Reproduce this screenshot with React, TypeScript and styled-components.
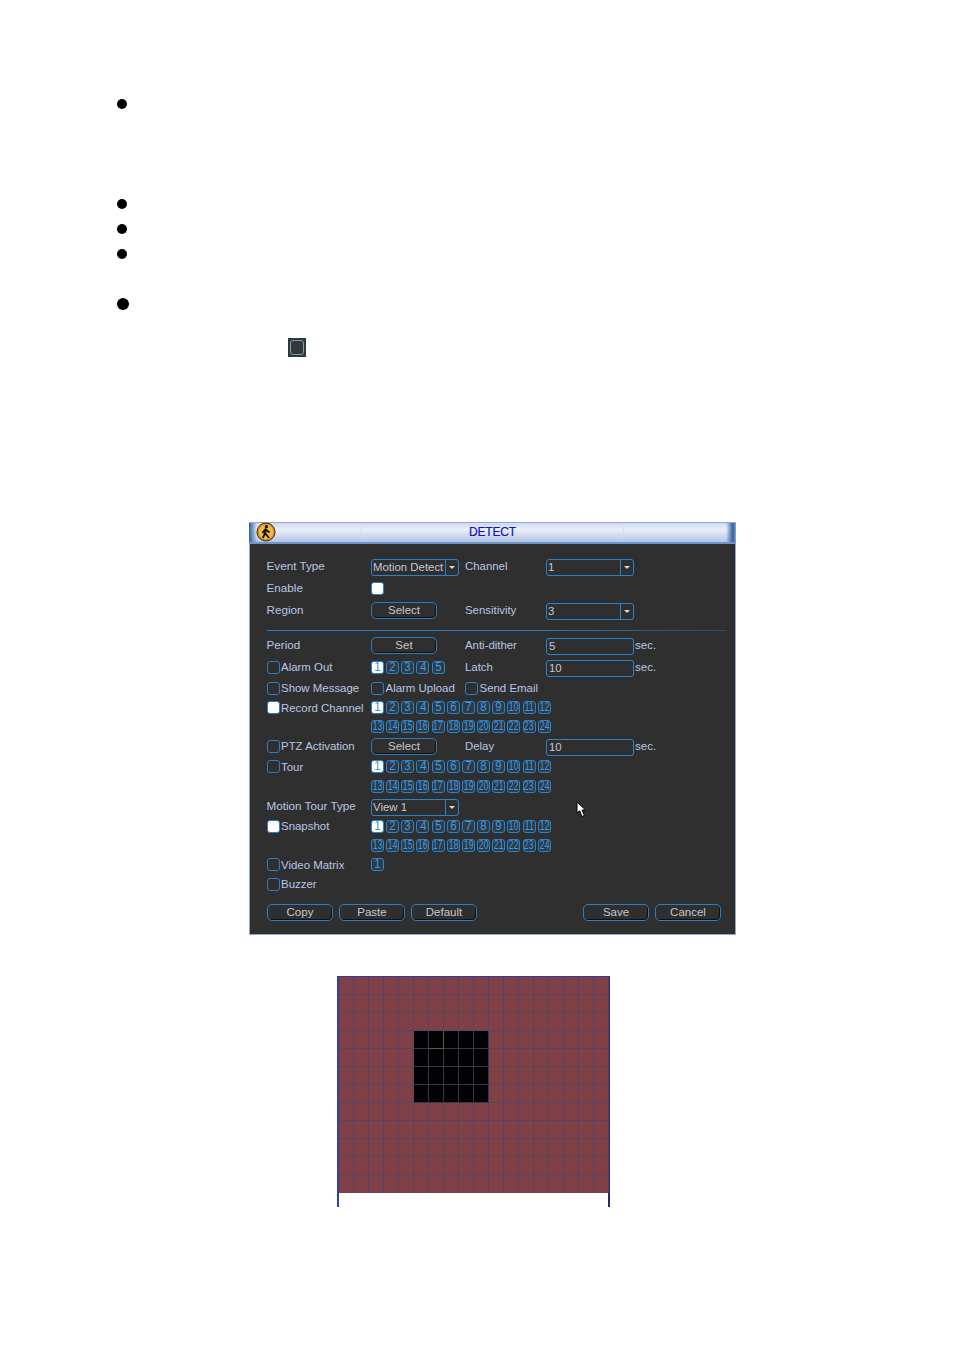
import React from 'react';
import styled, { createGlobalStyle } from 'styled-components';

const GlobalStyle = createGlobalStyle`
    html, body {
        margin: 0;
        padding: 0;
        background: #fff;
    }
    body {
        font-family: "Liberation Sans", Arial, sans-serif;
    }
`;

const first = Array.from({ length: 12 }, (_, i) => i + 1);
const second = Array.from({ length: 12 }, (_, i) => i + 13);

function Num({ n, on }: { n: number; on?: boolean }) {
    return (
        <NumberBox $on={on}>
            <Digits $wide={n > 9}>{n}</Digits>
        </NumberBox>
    );
}

function Channels({ list, active }: { list: number[]; active?: boolean }) {
    return (
        <NumberRow>
            {list.map((n) => (
                <Num key={n} n={n} on={active && n === 1} />
            ))}
        </NumberRow>
    );
}

function Dropdown({ value }: { value: string }) {
    return (
        <Select>
            <SelectValue>{value}</SelectValue>
            <SelectArrow />
        </Select>
    );
}

function CheckLabel({ text, on }: { text: string; on?: boolean }) {
    return (
        <CheckWrap>
            <Check $on={on} />
            <span>{text}</span>
        </CheckWrap>
    );
}

function WalkerIcon() {
    return (
        <svg width="20" height="20" viewBox="0 0 20 20">
            <circle cx="10" cy="10" r="9" fill="#d98f1e" stroke="#3a2c14" strokeWidth="1" />
            <circle cx="10" cy="10" r="7.2" fill="#f6bc3c" />
            <circle cx="10.4" cy="4.8" r="1.7" fill="#111" />
            <path d="M10.2 7 L9 11.5 L6.8 16 M9.2 11 L13 16 M6.4 11 L9.4 7.2 L13.6 10.4" fill="none" stroke="#111" strokeWidth="1.9" />
        </svg>
    );
}

function Pointer() {
    return (
        <PointerWrap>
            <svg width="11" height="17" viewBox="0 0 11 17">
                <path d="M1 1 L1 12 L3.6 9.8 L6 15.5 L8.4 14.4 L6 9 L9.6 9 Z" fill="#fff" stroke="#000" strokeWidth="1" />
            </svg>
        </PointerWrap>
    );
}

const cells = Array.from({ length: 216 }, (_, i) => {
    const col = i % 18;
    const row = Math.floor(i / 18);
    return { col, row, off: col >= 5 && col <= 9 && row >= 3 && row <= 6 };
});

export default function App() {
    return (
        <Page>
            <GlobalStyle />
            <BulletList>
                <Bullet $h={100} />
                <Bullet $h={25} />
                <Bullet $h={25} />
                <Bullet $h={49} />
                <Bullet $h={36} $big />
            </BulletList>
            <InlineIcon />

            <Dialog>
                <TitleBar>
                    <TitleIcon><WalkerIcon /></TitleIcon>
                    <TitleInset>DETECT</TitleInset>
                </TitleBar>
                <Body>
                    <Row $h={22}>
                        <LabelCol $plain>Event Type</LabelCol>
                        <ValueCol><Dropdown value="Motion Detect" /></ValueCol>
                        <ThirdCol>Channel</ThirdCol>
                        <Dropdown value="1" />
                    </Row>
                    <Row $h={22}>
                        <LabelCol $plain>Enable</LabelCol>
                        <ValueCol><Check $on /></ValueCol>
                    </Row>
                    <Row $h={22}>
                        <LabelCol $plain>Region</LabelCol>
                        <ValueCol><ActionButton>Select</ActionButton></ValueCol>
                        <ThirdCol>Sensitivity</ThirdCol>
                        <Dropdown value="3" />
                    </Row>
                    <Divider />
                    <Row $h={22}>
                        <LabelCol $plain>Period</LabelCol>
                        <ValueCol><ActionButton>Set</ActionButton></ValueCol>
                        <ThirdCol>Anti-dither</ThirdCol>
                        <TextInput>5</TextInput>
                        <Unit>sec.</Unit>
                    </Row>
                    <Row $h={22}>
                        <LabelCol><CheckLabel text="Alarm Out" /></LabelCol>
                        <ValueCol>
                            <NumberRow>
                                {[1, 2, 3, 4, 5].map((n) => <Num key={n} n={n} on={n === 1} />)}
                            </NumberRow>
                        </ValueCol>
                        <ThirdCol>Latch</ThirdCol>
                        <TextInput>10</TextInput>
                        <Unit>sec.</Unit>
                    </Row>
                    <Row $h={20}>
                        <LabelCol><CheckLabel text="Show Message" /></LabelCol>
                        <ValueCol><CheckLabel text="Alarm Upload" /></ValueCol>
                        <ThirdCol><CheckLabel text="Send Email" /></ThirdCol>
                    </Row>
                    <Row $h={19}>
                        <LabelCol><CheckLabel text="Record Channel" on /></LabelCol>
                        <Channels list={first} active />
                    </Row>
                    <Row $h={19}>
                        <LabelCol />
                        <Channels list={second} />
                    </Row>
                    <Row $h={20}>
                        <LabelCol><CheckLabel text="PTZ Activation" /></LabelCol>
                        <ValueCol><ActionButton>Select</ActionButton></ValueCol>
                        <ThirdCol>Delay</ThirdCol>
                        <TextInput>10</TextInput>
                        <Unit>sec.</Unit>
                    </Row>
                    <Row $h={21}>
                        <LabelCol><CheckLabel text="Tour" /></LabelCol>
                        <Channels list={first} active />
                    </Row>
                    <Row $h={19}>
                        <LabelCol />
                        <Channels list={second} />
                    </Row>
                    <Row $h={20}>
                        <LabelCol $plain>Motion Tour Type</LabelCol>
                        <ValueCol><Dropdown value="View 1" /></ValueCol>
                    </Row>
                    <Row $h={20}>
                        <LabelCol><CheckLabel text="Snapshot" on /></LabelCol>
                        <Channels list={first} active />
                    </Row>
                    <Row $h={19}>
                        <LabelCol />
                        <Channels list={second} />
                    </Row>
                    <Row $h={19}>
                        <LabelCol><CheckLabel text="Video Matrix" /></LabelCol>
                        <NumberRow><Num n={1} /></NumberRow>
                    </Row>
                    <Row $h={20}>
                        <LabelCol><CheckLabel text="Buzzer" /></LabelCol>
                    </Row>
                    <ButtonBar>
                        <ButtonGroup>
                            <ActionButton>Copy</ActionButton>
                            <ActionButton>Paste</ActionButton>
                            <ActionButton>Default</ActionButton>
                        </ButtonGroup>
                        <ButtonGroup>
                            <ActionButton>Save</ActionButton>
                            <ActionButton>Cancel</ActionButton>
                        </ButtonGroup>
                    </ButtonBar>
                    <Pointer />
                </Body>
            </Dialog>

            <RegionFrame>
                <RegionGrid>
                    {cells.map((c) => (
                        <Cell key={`${c.col}-${c.row}`} $off={c.off} $mark={c.col === 6 && c.row === 3} $last={c.row === 11} />
                    ))}
                </RegionGrid>
            </RegionFrame>
        </Page>
    );
}

const Page = styled.div`
    width: 954px;
    height: 1350px;
    padding-top: 99px;
    box-sizing: border-box;
    overflow: hidden;
    background: #fff;
`;

const BulletList = styled.div`
    display: flex;
    flex-direction: column;
    padding-left: 117px;
`;

const Bullet = styled.div<{ $h: number; $big?: boolean }>`
    height: ${(p) => p.$h}px;
    &::before {
        content: '';
        display: block;
        width: ${(p) => (p.$big ? 12 : 10)}px;
        height: ${(p) => (p.$big ? 12 : 10)}px;
        border-radius: 50%;
        background: #000;
    }
`;

const InlineIcon = styled.div`
    width: 18px;
    height: 19px;
    margin-left: 288px;
    margin-top: 4px;
    box-sizing: border-box;
    background: #2b3a40;
    padding: 2px;
    &::before {
        content: '';
        display: block;
        width: 14px;
        height: 15px;
        box-sizing: border-box;
        border: 1px solid #7f9ea6;
        border-radius: 3px;
        background: #33373a;
    }
`;

const Dialog = styled.div`
    width: 487px;
    height: 413px;
    margin: 165px 0 0 249px;
    box-sizing: border-box;
    display: flex;
    flex-direction: column;
    color: #b9c6e6;
    font-size: 11.7px;
`;

const TitleBar = styled.div`
    height: 20px;
    flex: none;
    display: flex;
    box-sizing: border-box;
    position: relative;
    border-top: 1px solid #8fa8d8;
    background:
        linear-gradient(90deg, #2f5f9a 0, rgba(47, 95, 154, 0) 8px, rgba(47, 95, 154, 0) calc(100% - 10px), #2f5f9a calc(100% - 3px), #8fa8d0 100%),
        linear-gradient(180deg, #cfd9f0 0, #eaeff9 35%, #b4c4e6 100%);
`;

const TitleIcon = styled.div`
    position: absolute;
    left: 7px;
    top: -1px;
    height: 20px;
`;

const TitleInset = styled.div`
    margin: 1px 0 0 112px;
    width: 263px;
    height: 14px;
    box-sizing: border-box;
    border: 1px solid #d6dcec;
    border-bottom: none;
    display: flex;
    align-items: center;
    justify-content: center;
    color: #1111cc;
    font-size: 12px;
    letter-spacing: -0.2px;
    -webkit-text-stroke: 0.2px #1111cc;
`;

const Body = styled.div`
    flex: 1;
    position: relative;
    box-sizing: border-box;
    background: #2f2f2f;
    border: 1px solid #8ea6cc;
    border-top: 2px solid #6f94c8;
    padding: 11px 0 0 17px;
`;

const Row = styled.div<{ $h: number }>`
    height: ${(p) => p.$h}px;
    display: flex;
    align-items: center;
`;

const LabelCol = styled.div<{ $plain?: boolean }>`
    width: 104px;
    flex: none;
    white-space: nowrap;
    text-indent: -0.5px;
    padding-bottom: ${(p) => (p.$plain ? 2 : 0)}px;
`;

const ValueCol = styled.div`
    width: 94px;
    flex: none;
    white-space: nowrap;
    font-size: 11.5px;
`;

const ThirdCol = styled.div`
    width: 81px;
    flex: none;
    white-space: nowrap;
    font-size: 11.4px;
`;

const CheckWrap = styled.div`
    display: flex;
    align-items: center;
    gap: 1.5px;
    font-size: 11.45px;
`;

const Check = styled.div<{ $on?: boolean }>`
    width: 13px;
    height: 13px;
    flex: none;
    box-sizing: border-box;
    border: 1px solid #2a7fc4;
    border-radius: 3px;
    background: ${(p) => (p.$on ? '#fff' : 'transparent')};
`;

const Select = styled.div`
    width: 88px;
    height: 17px;
    margin-top: 2px;
    box-sizing: border-box;
    border: 1px solid #2a84cc;
    border-radius: 3px;
    display: flex;
    align-items: stretch;
`;

const SelectValue = styled.div`
    flex: 1;
    padding-left: 1px;
    line-height: 15px;
    font-size: 11.4px;
    color: #c4c8d2;
    white-space: nowrap;
`;

const SelectArrow = styled.div`
    width: 13px;
    flex: none;
    box-sizing: border-box;
    border-left: 1px solid #2a84cc;
    display: flex;
    align-items: center;
    justify-content: center;
    &::before {
        content: '';
        border-left: 3px solid transparent;
        border-right: 3px solid transparent;
        border-top: 3px solid #d8d8d8;
    }
`;

const ActionButton = styled.div`
    width: 66px;
    height: 17px;
    margin-top: 1px;
    box-sizing: border-box;
    border: 1px solid #2a7fc4;
    border-radius: 5px;
    box-shadow: inset -1px -1px 0 #111;
    color: #c8c8c8;
    text-align: center;
    font-size: 11.5px;
    line-height: 15px;
`;

const Divider = styled.div`
    height: 1px;
    margin: 9px 9px 3px 0;
    background: linear-gradient(90deg, #2a7fc4 0, #2a7fc4 55%, #2c4a62 100%);
`;

const TextInput = styled.div`
    width: 88px;
    height: 17px;
    margin-top: 2px;
    flex: none;
    box-sizing: border-box;
    border: 1px solid #2a84cc;
    border-radius: 3px;
    padding-left: 2px;
    line-height: 15px;
    font-size: 11.4px;
    color: #c4c8d2;
`;

const Unit = styled.div`
    font-size: 11.5px;
    margin-left: 1px;
`;

const NumberRow = styled.div`
    display: flex;
    gap: 2.17px;
`;

const NumberBox = styled.div<{ $on?: boolean }>`
    width: 13px;
    height: 13px;
    box-sizing: border-box;
    border: 1px solid #2a84cc;
    border-radius: 3px;
    display: flex;
    align-items: center;
    justify-content: center;
    background: ${(p) => (p.$on ? '#fff' : 'rgba(42, 132, 204, 0.14)')};
    color: ${(p) => (p.$on ? '#3a94d8' : '#3d9ae6')};
    font-size: 12px;
    line-height: 11px;
    text-indent: 0;
`;

const Digits = styled.span<{ $wide?: boolean }>`
    display: inline-block;
    flex: none;
    transform: scaleX(${(p) => (p.$wide ? 0.72 : 0.95)});
`;

const ButtonBar = styled.div`
    display: flex;
    justify-content: space-between;
    margin: 9px 14px 0 0;
`;

const ButtonGroup = styled.div`
    display: flex;
    gap: 6px;
`;

const PointerWrap = styled.div`
    position: absolute;
    left: 326px;
    top: 257px;
    height: 17px;
`;

const RegionFrame = styled.div`
    width: 273px;
    height: 231px;
    margin: 41px 0 0 337px;
    box-sizing: border-box;
    border-top: 1px solid #3b3b9c;
    border-left: 2px solid #2f3fa8;
    border-right: 2px solid #1c2a78;
`;

const RegionGrid = styled.div`
    display: grid;
    grid-template-columns: repeat(18, 15px);
    grid-template-rows: repeat(12, 18px);
    width: 270px;
`;

const Cell = styled.div<{ $off?: boolean; $mark?: boolean; $last?: boolean }>`
    box-sizing: border-box;
    background: ${(p) => (p.$off ? '#020204' : '#7f4048')};
    border-right: 1px solid ${(p) => (p.$mark ? '#5a5f48' : p.$off ? '#33384c' : '#574460')};
    border-bottom: ${(p) => (p.$last ? 'none' : `1px solid ${p.$mark ? '#5a5f48' : p.$off ? '#33384c' : '#574460'}`)};
`;
